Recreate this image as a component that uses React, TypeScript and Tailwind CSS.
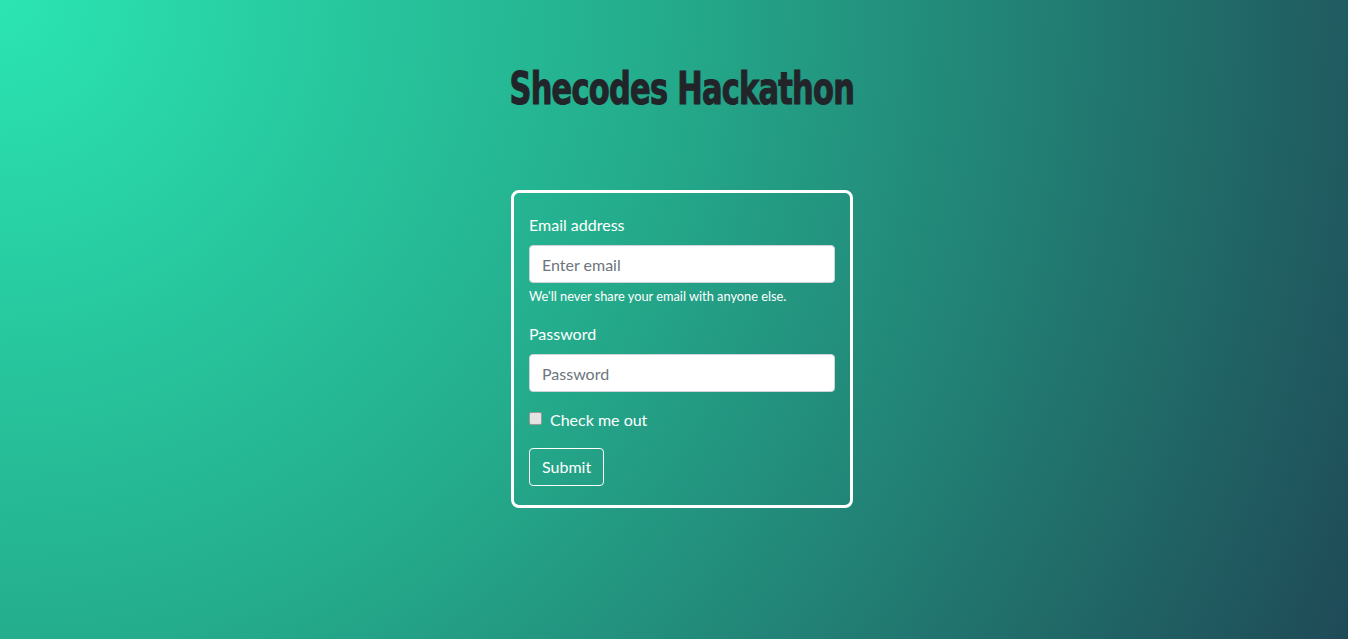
import React from "react";

export default function App() {
  return (
    <div
      className="w-full min-h-[639px] h-[639px] overflow-hidden bg-[radial-gradient(circle_at_top_left,#2be5b2_0%,#24ac8c_44%,#1f4a57_100%)]"
      style={{ fontFamily: "Lato, 'Noto Sans', sans-serif" }}
    >
      <div className="flex flex-col items-center pt-[65px] pl-4">
        <h1
          className="text-[44px] leading-[48px] font-bold text-[#212529] tracking-[-1px] scale-x-[0.77] whitespace-nowrap [-webkit-text-stroke:1px_#212529]"
          style={{ fontFamily: "Impact, 'DejaVu Sans Condensed', 'Liberation Sans Narrow', sans-serif" }}
        >
          Shecodes Hackathon
        </h1>
        <form className="mt-[77px] w-[342px] border-[3px] border-white rounded-lg px-[15px] pt-5 pb-[19px] text-white">
          <div className="mb-4">
            <label className="block text-base leading-6 mb-2">Email address</label>
            <input
              type="email"
              placeholder="Enter email"
              className="block w-[306px] h-[38px] px-3 rounded bg-white border border-[#ced4da] text-base text-[#495057] placeholder:text-[#6c757d] outline-none"
            />
            <small className="block mt-1 text-[12.8px] leading-[19px] text-white">
              We'll never share your email with anyone else.
            </small>
          </div>
          <div className="mb-4">
            <label className="block text-base leading-6 mb-2">Password</label>
            <input
              type="password"
              placeholder="Password"
              className="block w-[306px] h-[38px] px-3 rounded bg-white border border-[#ced4da] text-base text-[#495057] placeholder:text-[#6c757d] outline-none"
            />
          </div>
          <div className="mb-4 relative pl-5 h-6 flex items-center">
            <input
              type="checkbox"
              className="absolute left-0 top-1 w-[13px] h-[13px] appearance-none bg-[#e3e3e3] border border-[#9a9a9a] rounded-[2px]"
            />
            <label className="text-base leading-6 ml-px">Check me out</label>
          </div>
          <button
            type="button"
            className="h-[38px] px-3 rounded border border-white text-base leading-6 text-white bg-transparent"
          >
            Submit
          </button>
        </form>
      </div>
    </div>
  );
}
